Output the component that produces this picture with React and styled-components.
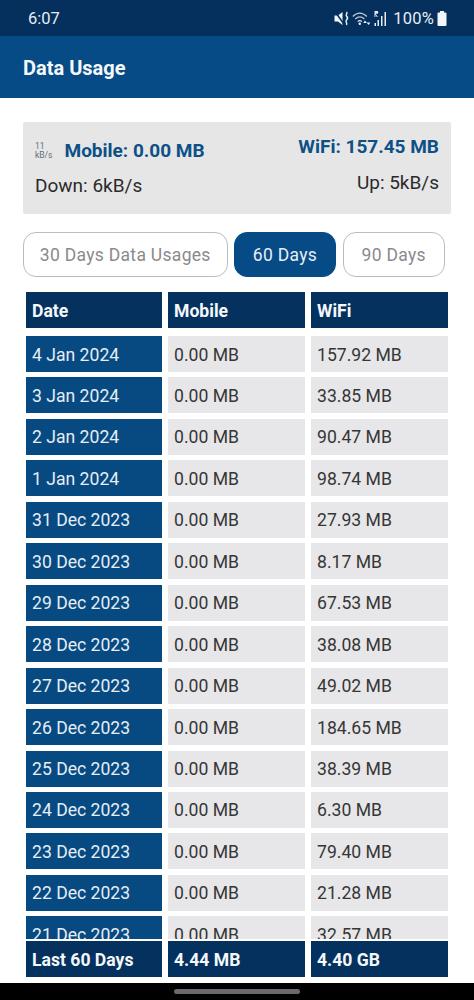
import React from 'react'
import styled, { createGlobalStyle } from 'styled-components'

const rows = [
  ['4 Jan 2024', '0.00 MB', '157.92 MB'],
  ['3 Jan 2024', '0.00 MB', '33.85 MB'],
  ['2 Jan 2024', '0.00 MB', '90.47 MB'],
  ['1 Jan 2024', '0.00 MB', '98.74 MB'],
  ['31 Dec 2023', '0.00 MB', '27.93 MB'],
  ['30 Dec 2023', '0.00 MB', '8.17 MB'],
  ['29 Dec 2023', '0.00 MB', '67.53 MB'],
  ['28 Dec 2023', '0.00 MB', '38.08 MB'],
  ['27 Dec 2023', '0.00 MB', '49.02 MB'],
  ['26 Dec 2023', '0.00 MB', '184.65 MB'],
  ['25 Dec 2023', '0.00 MB', '38.39 MB'],
  ['24 Dec 2023', '0.00 MB', '6.30 MB'],
  ['23 Dec 2023', '0.00 MB', '79.40 MB'],
  ['22 Dec 2023', '0.00 MB', '21.28 MB'],
  ['21 Dec 2023', '0.00 MB', '32.57 MB'],
]

export default function App() {
  return (
    <Screen>
      <GlobalStyle />
      <StatusBar>
        <Clock>6:07</Clock>
        <StatusIcons>
          <MuteIcon />
          <WifiIcon />
          <SignalIcon />
          <Battery>100%</Battery>
          <BatteryIcon />
        </StatusIcons>
      </StatusBar>
      <AppBar>Data Usage</AppBar>

      <Content>
        <Panel>
          <PanelSide>
            <MobileLine>
              <Speed>
                <span>11</span>
                <span>kB/s</span>
              </Speed>
              <Usage>Mobile: 0.00 MB</Usage>
            </MobileLine>
            <Rate>Down: 6kB/s</Rate>
          </PanelSide>
          <PanelSide $right>
            <Usage>WiFi: 157.45 MB</Usage>
            <Rate>Up: 5kB/s</Rate>
          </PanelSide>
        </Panel>

        <Tabs>
          <Tab $width={204.5}>30 Days Data Usages</Tab>
          <Tab $width={102} $active>60 Days</Tab>
          <Tab $width={102.5}>90 Days</Tab>
        </Tabs>

        <Table>
          <Row>
            <HeadCell>Date</HeadCell>
            <HeadCell>Mobile</HeadCell>
            <HeadCell>WiFi</HeadCell>
          </Row>
          <Body>
            {rows.map((r) => (
              <Row key={r[0]}>
                <DateCell>{r[0]}</DateCell>
                <Cell>{r[1]}</Cell>
                <Cell>{r[2]}</Cell>
              </Row>
            ))}
          </Body>
          <Row>
            <HeadCell>Last 60 Days</HeadCell>
            <HeadCell>4.44 MB</HeadCell>
            <HeadCell>4.40 GB</HeadCell>
          </Row>
        </Table>
      </Content>

      <NavBar>
        <HomePill />
      </NavBar>
    </Screen>
  )
}

const MuteIcon = () => (
  <svg width="15" height="15" viewBox="0 0 15 15" fill="none">
    <path d="M0.500 4.500h3.500l4.500-3.500v13l-4.500-3.500H0.500z" fill="#f2f6fa" />
    <path d="M1 0.500l9.500 13.500" stroke="#06305c" strokeWidth="1.500" />
    <path d="M12.500 1c1.800 1.500-1.500 2.500 0 4s1.500 2.500 0 4 1 2.500 0 5" stroke="#f2f6fa" strokeWidth="1.400" />
  </svg>
)

const WifiIcon = () => (
  <svg width="19" height="15" viewBox="0 0 19 15" fill="none">
    <path d="M0.800 5.500C5 1 10.500 1 14.800 5.500" stroke="#b9c8d8" strokeWidth="1.200" />
    <path d="M3.200 8c3-2.800 6.200-2.800 9.200 0" stroke="#b9c8d8" strokeWidth="1.200" />
    <path d="M5.700 10.500c1.500-1.300 2.700-1.300 4.200 0" stroke="#dfe7ef" strokeWidth="1.200" />
    <circle cx="7.800" cy="12.800" r="1.200" fill="#f2f6fa" />
    <path d="M13 9.500l-1.800 2.500h3.600zM16.500 14l-1.800-2.500h3.600z" fill="#f2f6fa" />
  </svg>
)

const SignalIcon = () => (
  <svg width="14" height="17" viewBox="0 0 14 17" fill="#e6edf4">
    <rect x="0.500" y="13" width="1.500" height="3" />
    <rect x="3.500" y="10" width="1.500" height="6" />
    <rect x="7" y="6" width="1.500" height="10" />
    <rect x="10.500" y="2" width="1.500" height="14" />
    <path d="M0.500 1h2.600c1.600 0 1.600 2.800 0 2.800H1.600L3.900 7H2.800L1.400 4.600V7H0.500z" />
  </svg>
)

const BatteryIcon = () => (
  <svg width="10" height="15" viewBox="0 0 10 15" fill="#f2f6fa">
    <path d="M3 0h4v1.500h1.500a1 1 0 0 1 1 1V14a1 1 0 0 1-1 1h-7a1 1 0 0 1-1-1V2.500a1 1 0 0 1 1-1H3z" />
  </svg>
)

const GlobalStyle = createGlobalStyle`
  html, body {
    margin: 0;
    padding: 0;
    background: #fff;
  }
  * {
    box-sizing: border-box;
  }
`

const Screen = styled.div`
  width: 474px;
  height: 1000px;
  display: flex;
  flex-direction: column;
  overflow: hidden;
  background: #fff;
  font-family: Roboto, sans-serif;
`

const StatusBar = styled.div`
  height: 36px;
  flex: none;
  display: flex;
  align-items: center;
  justify-content: space-between;
  padding: 0 27px 0 28px;
  background: #052f5c;
  color: #e6edf4;
`

const Clock = styled.span`
  font-size: 16.500px;
`

const StatusIcons = styled.div`
  display: flex;
  align-items: center;
  gap: 3px;
`

const Battery = styled.span`
  font-size: 16.500px;
  letter-spacing: 0.200px;
  margin-left: 2px;
`

const AppBar = styled.div`
  height: 62px;
  flex: none;
  display: flex;
  align-items: center;
  padding: 2px 0 0 23px;
  background: #064b85;
  color: #f4f8fb;
  font-size: 20px;
  font-weight: 700;
`

const Content = styled.div`
  flex: 1;
  min-height: 0;
  display: flex;
  flex-direction: column;
  padding: 24px 23px 6px;
`

const Panel = styled.div`
  height: 92px;
  flex: none;
  display: flex;
  justify-content: space-between;
  padding: 12px 12px 0 12px;
  background: #e6e6e7;
  border-radius: 2px;
`

const PanelSide = styled.div`
  display: flex;
  flex-direction: column;
  align-items: ${(p) => (p.$right ? 'flex-end' : 'flex-start')};
  gap: ${(p) => (p.$right ? '11px' : '10px')};
`

const MobileLine = styled.div`
  display: flex;
  align-items: center;
  gap: 12px;
  margin-top: 4px;
`

const Speed = styled.div`
  display: flex;
  flex-direction: column;
  font-size: 8.500px;
  line-height: 9px;
  color: #5f6f7d;
`

const Usage = styled.span`
  font-size: 19px;
  line-height: 26px;
  font-weight: 700;
  color: #0d5086;
`

const Rate = styled.span`
  font-size: 19px;
  line-height: 24px;
  color: #2b2b2b;
`

const Tabs = styled.div`
  display: flex;
  gap: 6.500px;
  margin-top: 18px;
  flex: none;
`

const Tab = styled.div`
  width: ${(p) => p.$width}px;
  height: 45px;
  display: flex;
  align-items: center;
  justify-content: center;
  border: 1px solid ${(p) => (p.$active ? '#064b85' : '#bbbcbe')};
  border-radius: 13px;
  background: ${(p) => (p.$active ? '#064b85' : '#fff')};
  color: ${(p) => (p.$active ? '#e8eef4' : '#8a8a8c')};
  font-size: 17.500px;
  letter-spacing: 0.300px;
`

const Table = styled.div`
  flex: 1;
  min-height: 0;
  display: flex;
  flex-direction: column;
  margin: 15px 3px 0;
  gap: 8px;
`

const Body = styled.div`
  flex: 1;
  min-height: 0;
  overflow: hidden;
  display: flex;
  flex-direction: column;
  gap: 5.460px;
  margin-bottom: -6px;
`

const Row = styled.div`
  display: grid;
  grid-template-columns: 136px 137px 137px;
  gap: 6px;
  flex: none;
`

const Cell = styled.div`
  height: 36px;
  display: flex;
  align-items: center;
  padding: 1px 0 0 6px;
  background: #e7e7e9;
  color: #363636;
  font-size: 17.600px;
`

const DateCell = styled(Cell)`
  background: #074a82;
  color: #e6edf4;
`

const HeadCell = styled(Cell)`
  background: #04315e;
  color: #f4f8fb;
  font-weight: 700;
`

const NavBar = styled.div`
  height: 17px;
  flex: none;
  display: flex;
  justify-content: center;
  padding-top: 6px;
  background: #000;
`

const HomePill = styled.div`
  width: 126px;
  height: 5px;
  border-radius: 3px;
  background: #6a6a6a;
`
